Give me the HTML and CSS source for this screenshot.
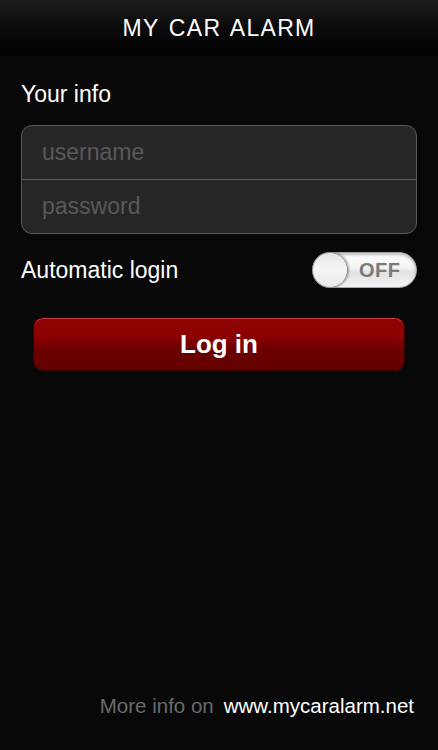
FILE: index.html
```html
<!DOCTYPE html>
<html lang="en">
<head>
<meta charset="utf-8">
<title>My Car Alarm</title>
<link rel="stylesheet" href="styles.css">
</head>
<body>
<div class="app">
  <header class="topbar"><h1 class="title">MY CAR ALARM</h1></header>
  <main class="content">
    <div class="section-label">Your info</div>
    <div class="fields">
      <div class="field"><span class="placeholder">username</span></div>
      <div class="field field-last"><span class="placeholder">password</span></div>
    </div>
    <div class="auto-row">
      <span class="auto-label">Automatic login</span>
      <div class="toggle">
        <span class="knob"></span>
        <span class="toggle-text">OFF</span>
      </div>
    </div>
    <button class="login">Log in</button>
  </main>
  <footer class="footer">
    <span class="more">More info on</span>
    <span class="site">www.mycaralarm.net</span>
  </footer>
</div>
</body>
</html>
```
FILE: styles.css
```css
html, body {
  margin: 0;
  padding: 0;
  background: #080808;
}
body {
  font-family: "Liberation Sans", Arial, Helvetica, sans-serif;
  color: #fff;
}
.app {
  width: 438px;
  height: 750px;
  display: flex;
  flex-direction: column;
  background: #080808;
}
.topbar {
  height: 56px;
  flex: 0 0 56px;
  display: flex;
  align-items: center;
  justify-content: center;
  background: linear-gradient(to bottom, #1e1e1e 0%, #0c0c0c 45%, #000 100%);
}
.title {
  margin: 0;
  font-size: 23px;
  font-weight: normal;
  letter-spacing: 1.3px;
  word-spacing: 2px;
  line-height: 24px;
  color: #fff;
}
.content {
  padding: 0 21px;
  display: flex;
  flex-direction: column;
}
.section-label {
  margin-top: 26px;
  font-size: 23px;
  line-height: 24px;
}
.fields {
  margin-top: 19px;
  border: 1px solid #5a5a5a;
  border-radius: 11px;
  background: #262626;
  overflow: hidden;
}
.field {
  height: 53px;
  display: flex;
  align-items: center;
  padding-left: 20px;
  border-bottom: 1px solid #5a5a5a;
}
.field-last {
  border-bottom: none;
}
.placeholder {
  font-size: 23px;
  color: #595959;
}
.auto-row {
  margin-top: 18px;
  height: 36px;
  display: flex;
  align-items: center;
  justify-content: space-between;
}
.auto-label {
  font-size: 23px;
}
.toggle {
  width: 103px;
  height: 34px;
  border-radius: 18px;
  border: 1px solid #a8a8a8;
  background: linear-gradient(to bottom, #ffffff 0%, #f2f2f2 45%, #e2e2e2 55%, #f4f4f4 100%);
  box-shadow: inset 0 2px 3px rgba(0,0,0,0.25);
  display: flex;
  align-items: center;
  position: relative;
}
.knob {
  width: 34px;
  height: 34px;
  border-radius: 50%;
  border: 1px solid #8f8f8f;
  margin-left: -1px;
  background: linear-gradient(to bottom, #e4e4e4 0%, #f6f6f6 50%, #e8e8e8 100%);
  box-shadow: 1px 0 2px rgba(0,0,0,0.35);
  flex: 0 0 auto;
}
.toggle-text {
  margin-left: 11px;
  font-size: 20px;
  font-weight: bold;
  color: #7a7a7a;
  letter-spacing: 0.5px;
}
.login {
  margin: 29px 12px 0;
  height: 54px;
  border-radius: 10px;
  border: 1px solid #3a0000;
  background: linear-gradient(to bottom, #920303 0%, #8a0000 38%, #6d0000 58%, #640000 100%);
  box-shadow: inset 0 1px 0 rgba(255,140,140,0.45), 0 1px 1px rgba(255,255,255,0.05);
  color: #fff;
  font-family: "Liberation Sans", Arial, Helvetica, sans-serif;
  font-size: 26px;
  font-weight: bold;
  padding: 0;
}
.footer {
  margin-top: auto;
  padding: 0 24px 32px 0;
  display: flex;
  justify-content: flex-end;
  align-items: center;
  gap: 10px;
  font-size: 20.5px;
  line-height: 24px;
}
.more {
  color: #6a6a6a;
}
.site {
  color: #fff;
}
```
